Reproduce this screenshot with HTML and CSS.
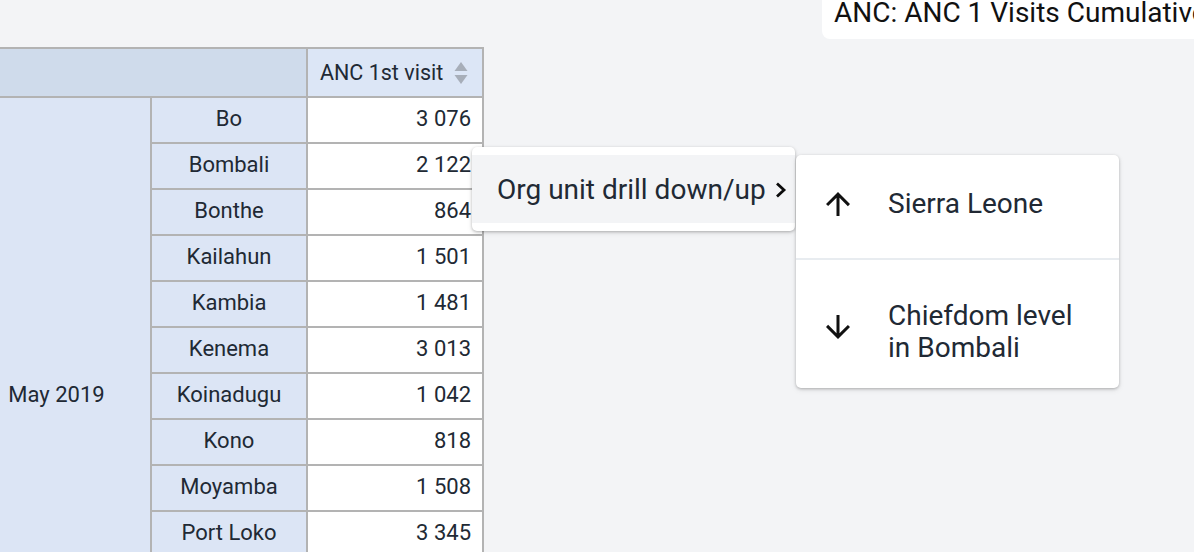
FILE: index.html
```html
<!DOCTYPE html>
<html lang="en">
<head>
<meta charset="utf-8">
<title>Pivot table drill menu</title>
<link rel="stylesheet" href="styles.css">
</head>
<body>
<div class="page">
  <div class="topbar">
    <div class="title-box"><span class="title">ANC: ANC 1 Visits Cumulative Plot</span></div>
  </div>
  <div class="stage">
    <div class="pivot">
      <div class="cell corner">&nbsp;</div>
      <div class="cell colhead"><span>ANC 1st visit</span>
        <svg class="sort" width="14" height="22" viewBox="0 0 14 22"><path d="M7 0 L13.5 9 L0.5 9 Z" fill="#a7aeb9"/><path d="M0.5 13 L13.5 13 L7 22 Z" fill="#a7aeb9"/></svg>
      </div>
      <div class="cell period">May 2019</div>
      <div class="cell rowhead">Bo</div><div class="cell value">3 076</div>
      <div class="cell rowhead">Bombali</div><div class="cell value">2 122</div>
      <div class="cell rowhead">Bonthe</div><div class="cell value">864</div>
      <div class="cell rowhead">Kailahun</div><div class="cell value">1 501</div>
      <div class="cell rowhead">Kambia</div><div class="cell value">1 481</div>
      <div class="cell rowhead">Kenema</div><div class="cell value">3 013</div>
      <div class="cell rowhead">Koinadugu</div><div class="cell value">1 042</div>
      <div class="cell rowhead">Kono</div><div class="cell value">818</div>
      <div class="cell rowhead">Moyamba</div><div class="cell value">1 508</div>
      <div class="cell rowhead">Port Loko</div><div class="cell value">3 345</div>
      <div class="cell rowhead">Pujehun</div><div class="cell value">1 229</div>
      <div class="cell rowhead">Tonkolili</div><div class="cell value">2 014</div>
      <div class="cell rowhead">Western Area</div><div class="cell value">4 712</div>
    </div>

    <div class="menu">
      <div class="menu-item active">
        <span class="menu-label">Org unit drill down/up</span>
        <svg class="chevron" width="14" height="18" viewBox="0 0 14 18"><polyline points="3,2.5 10,9 3,15.5" fill="none" stroke="#0b0b0b" stroke-width="2.8"/></svg>
      </div>
    </div>

    <div class="submenu">
      <div class="sub-item up">
        <svg class="arrow" width="36" height="36" viewBox="0 0 24 24"><path d="M4 12l1.41 1.41L11 7.83V20h2V7.83l5.58 5.59L20 12l-8-8-8 8z" fill="#111"/></svg>
        <span class="sub-label">Sierra Leone</span>
      </div>
      <div class="divider"></div>
      <div class="sub-item down">
        <svg class="arrow" width="36" height="36" viewBox="0 0 24 24"><path d="M20 12l-1.41-1.41L13 16.17V4h-2v12.17l-5.58-5.59L4 12l8 8 8-8z" fill="#111"/></svg>
        <span class="sub-label">Chiefdom level<br>in Bombali</span>
      </div>
    </div>
  </div>
</div>
</body>
</html>
```

FILE: styles.css
```css
html, body {
  margin: 0;
  padding: 0;
  background: #f3f4f6;
  overflow: hidden;
}
body {
  width: 1194px;
  height: 552px;
  font-family: Roboto, "Noto Sans", sans-serif;
  color: #212934;
}
.page {
  width: 1194px;
  height: 552px;
  overflow: hidden;
}
.topbar {
  height: 47px;
  display: grid;
  grid-template-columns: 822px 600px;
}
.title-box {
  grid-column: 2;
  height: 39px;
  background: #ffffff;
  border-radius: 0 0 0 8px;
  padding-left: 12px;
  display: flex;
  align-items: flex-end;
  box-sizing: border-box;
}
.title {
  font-size: 28px;
  line-height: 32px;
  color: #111111;
  white-space: nowrap;
  padding-bottom: 10px;
}
.stage {
  position: relative;
}
.pivot {
  display: grid;
  grid-template-columns: 187px 154px 174px;
  grid-auto-rows: 44px;
  grid-template-rows: 47px;
  gap: 2px;
  padding: 2px;
  background: #b3b3b3;
  margin-left: -39px;
  width: max-content;
}
.cell {
  display: flex;
  align-items: center;
  justify-content: center;
  font-size: 22px;
  background: #dce5f5;
  color: #212934;
  white-space: nowrap;
  padding-bottom: 3px;
  box-sizing: border-box;
}
.corner {
  grid-column: 1 / span 2;
  background: #cfdbeb;
}
.colhead {
  justify-content: flex-start;
  padding-left: 12px;
  padding-bottom: 0;
  font-size: 21.5px;
  background: #dce6f6;
}
.colhead .sort {
  margin-left: 11px;
}
.period {
  grid-column: 1;
  grid-row: 2 / span 13;
}
.rowhead {
  grid-column: 2;
}
.value {
  grid-column: 3;
  background: #ffffff;
  justify-content: flex-end;
  padding-right: 11px;
}
.menu {
  position: absolute;
  left: 472px;
  top: 100px;
  width: 323px;
  padding: 8px 0;
  background: #ffffff;
  border-radius: 5px;
  box-shadow: 0 1px 3px rgba(0,0,0,0.25), 0 2px 6px rgba(0,0,0,0.08);
}
.menu-item {
  height: 68px;
  display: flex;
  align-items: center;
  padding: 0 7px 0 25px;
  font-size: 28px;
}
.menu-item.active {
  background: #f3f4f6;
}
.menu-label {
  flex: 1;
  color: #212934;
  white-space: nowrap;
}
.chevron {
  margin-top: 1px;
}
.submenu {
  position: absolute;
  left: 796px;
  top: 108px;
  width: 323px;
  background: #ffffff;
  border-radius: 5px;
  box-shadow: 0 1px 3px rgba(0,0,0,0.25), 0 2px 6px rgba(0,0,0,0.08);
}
.sub-item {
  display: flex;
  align-items: center;
  padding-left: 24px;
  font-size: 28px;
  line-height: 32px;
}
.sub-item.up {
  height: 103px;
  box-sizing: border-box;
  padding-bottom: 5px;
}
.sub-item.down {
  height: 128px;
  box-sizing: border-box;
  padding-top: 16px;
}
.sub-item.down .arrow {
  margin-top: -10px;
}
.arrow {
  flex: none;
}
.sub-label {
  margin-left: 32px;
  color: #212934;
}
.divider {
  height: 2px;
  background: #e8ecf0;
}
```
